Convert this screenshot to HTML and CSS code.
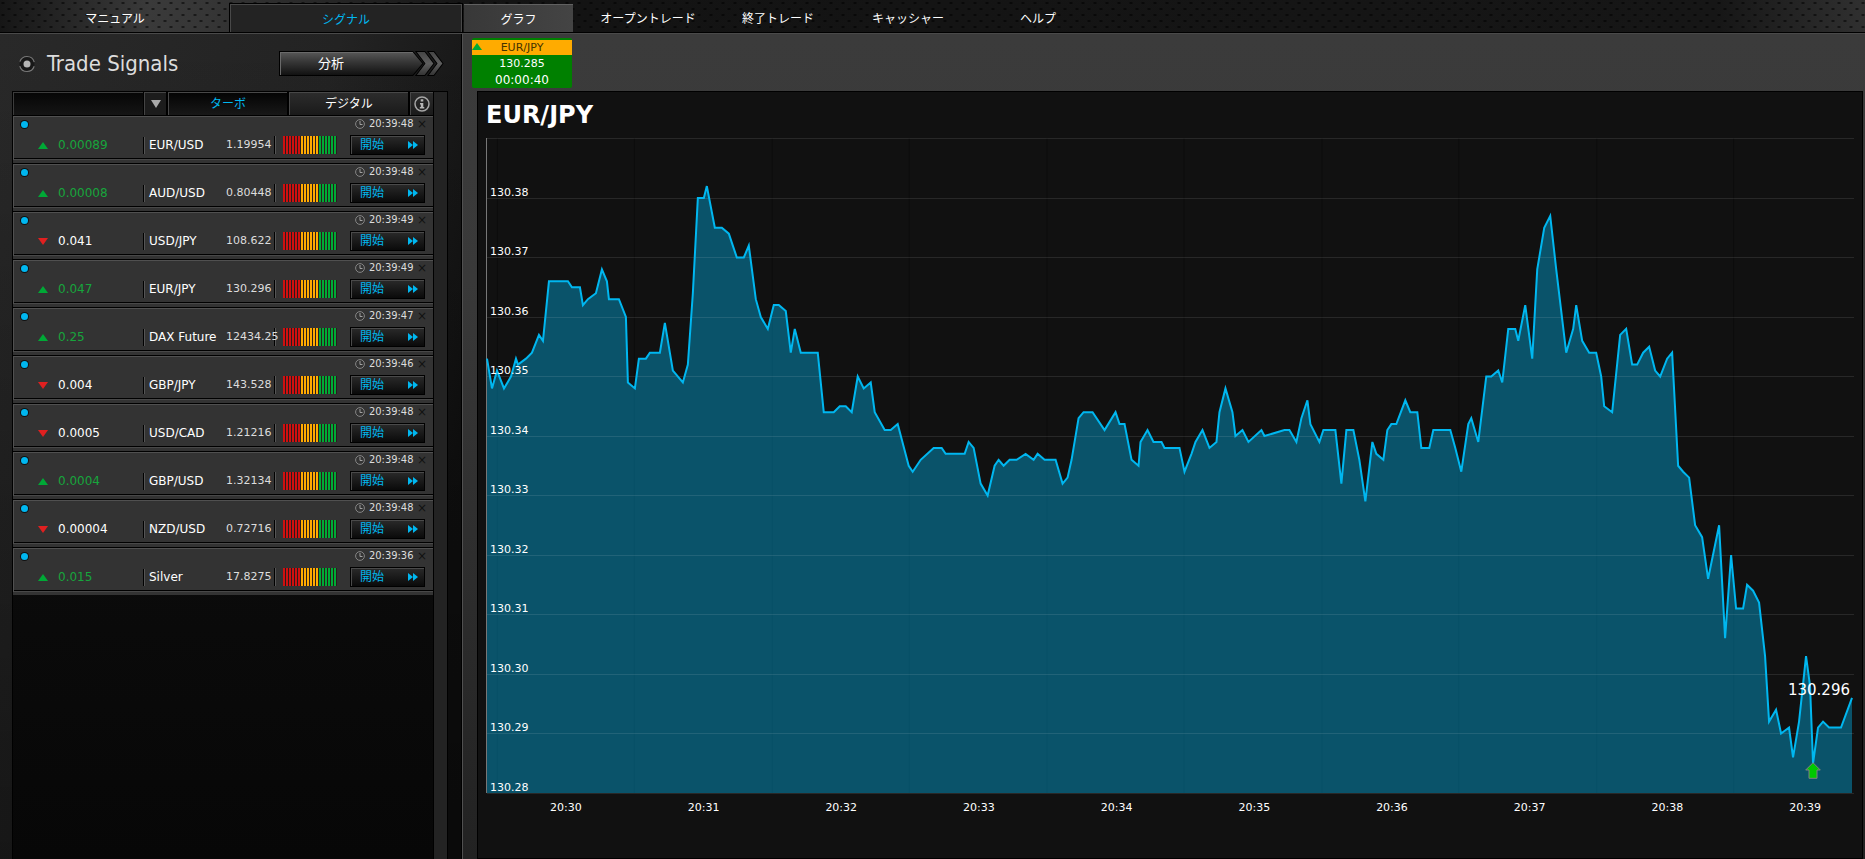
FILE: index.html
```html
<!DOCTYPE html>
<html lang="ja">
<head>
    <meta charset="UTF-8">
    <meta name="viewport" content="width=device-width, initial-scale=1.0">
    <title>Trade Signals</title>
    <link rel="stylesheet" href="styles.css">
</head>
<body>
    <svg class="sprite" aria-hidden="true">
        <symbol id="clock" viewBox="0 0 10 10">
            <circle cx="5" cy="5" r="4.4" fill="none" stroke="#858585"/>
            <path d="M5 2V5.500H7.500" fill="none" stroke="#a0a0a0"/>
        </symbol>
        <symbol id="forward" viewBox="0 0 10 8">
            <path d="M0 0L5 4V0L10 4L5 8V4L0 8Z" fill="#00b7f0"/>
        </symbol>
    </svg>
    <header id="header">
        <nav class="sideTabs">
            <a href="#">マニュアル</a>
            <a href="#" class="on">シグナル</a>
        </nav>
        <nav class="mainTabs">
            <a href="#" class="on">グラフ</a>
            <a href="#">オープントレード</a>
            <a href="#">終了トレード</a>
            <a href="#">キャッシャー</a>
            <a href="#">ヘルプ</a>
        </nav>
    </header>
    <div class="wrap">
        <aside id="signals">
            <div class="title">
                <svg class="radio" viewBox="0 0 20 20" aria-hidden="true">
                    <circle cx="10" cy="10" r="7.500" fill="#181818" stroke="#777" stroke-width="1.200" stroke-dasharray="19 4.560" stroke-dashoffset="-2.280"/>
                    <circle cx="10" cy="10" r="3.500" fill="#b5b5b5"/>
                </svg>
                <h1>Trade Signals</h1>
                <button type="button" class="analysis">
                    <svg viewBox="0 0 164 25" preserveAspectRatio="none" aria-hidden="true">
                        <defs>
                            <linearGradient id="metal" x1="0" y1="0" x2="0" y2="1">
                                <stop offset="0" stop-color="#5a5a5a"/>
                                <stop offset="0.400" stop-color="#393939"/>
                                <stop offset="1" stop-color="#101010"/>
                            </linearGradient>
                            <linearGradient id="chevron" x1="0" y1="0" x2="0" y2="1">
                                <stop offset="0" stop-color="#444"/>
                                <stop offset="0.500" stop-color="#5e5e5e"/>
                                <stop offset="1" stop-color="#333"/>
                            </linearGradient>
                        </defs>
                        <path d="M0.500 0.500H133L143 12.500L133 24.500H0.500Z" fill="url(#metal)" stroke="#000"/>
                        <path d="M136 0.500H145L154 12.500L145 24.500H136L145 12.500Z" fill="url(#chevron)" stroke="#000"/>
                        <path d="M148 0.500H154L163 12.500L154 24.500H148L157 12.500Z" fill="url(#chevron)" stroke="#000"/>
                        <path d="M1.500 24V1.500H133" fill="none" stroke="#6a6a6a"/>
                    </svg>
                    <span>分析</span>
                </button>
            </div>
            <div class="panel">
                <div class="list">
                    <div class="filter">
                        <select aria-label="銘柄"><option></option></select>
                        <span class="arrow"></span>
                        <button type="button" class="on">ターボ</button>
                        <button type="button">デジタル</button>
                        <button type="button" class="info" aria-label="情報">
                            <svg viewBox="0 0 16 16" aria-hidden="true">
                                <circle cx="8" cy="8" r="7" fill="none" stroke="#a5a5a5" stroke-width="1.500"/>
                                <path d="M6.700 3.300H9.300V5.500H6.700ZM6 7H9.300V11H10.300V12.500H5.800V11H6.800V8.400H6Z" fill="#b5b5b5"/>
                            </svg>
                        </button>
                    </div>
                    <ul id="rows"></ul>
                </div>
            </div>
        </aside>
        <main>
            <div class="trades">
                <div class="trade">
                    <h2>EUR/JPY</h2>
                    <p>130.285</p>
                    <p>00:00:40</p>
                </div>
            </div>
            <section class="chart">
                <h2>EUR/JPY</h2>
                <div class="plot">
                    <svg id="graph" viewBox="0 0 1368 655" preserveAspectRatio="none" aria-label="EUR/JPY"></svg>
                    <ol class="prices">
                        <li>130.38</li>
                        <li>130.37</li>
                        <li>130.36</li>
                        <li>130.35</li>
                        <li>130.34</li>
                        <li>130.33</li>
                        <li>130.32</li>
                        <li>130.31</li>
                        <li>130.30</li>
                        <li>130.29</li>
                        <li>130.28</li>
                    </ol>
                    <span class="last">130.296</span>
                    <svg class="entry" viewBox="0 0 16 17" aria-hidden="true">
                        <path d="M8 0.700L15.300 8H12V16.300H4V8H0.700Z" fill="#00c800" stroke="#808080"/>
                    </svg>
                </div>
                <ol class="times">
                    <li>20:30</li>
                    <li>20:31</li>
                    <li>20:32</li>
                    <li>20:33</li>
                    <li>20:34</li>
                    <li>20:35</li>
                    <li>20:36</li>
                    <li>20:37</li>
                    <li>20:38</li>
                    <li>20:39</li>
                </ol>
            </section>
        </main>
    </div>
    <script src="script.js"></script>
</body>
</html>
```
FILE: styles.css
```css
/* reset */
* {box-sizing: border-box;}
body, h1, h2, p, ul, ol {margin: 0; padding: 0;}
li {list-style: none;}
a {text-decoration: none; color: inherit;}
button, select {margin: 0; padding: 0; border: 0; border-radius: 0; background: none; color: inherit; font: inherit; cursor: pointer;}
svg {display: block;}
.sprite {position: absolute; width: 0; height: 0;}
body {
    display: flex;
    flex-direction: column;
    min-height: 100vh;
    background: #111;
    color: #fff;
    font: 12px/16px "DejaVu Sans", "Noto Sans CJK JP", sans-serif;
}
/* header */
#header {
    display: flex;
    height: 34px;
    padding-top: 4px;
    border-bottom: 1px solid #4a4a4a;
    box-shadow: inset 0 -1px #000;
    background:
        radial-gradient(ellipse 2px 1px at 3px 3px, #0008 80%, transparent) 0 0 / 12px 12px,
        radial-gradient(ellipse 2px 1px at 9px 9px, #0008 80%, transparent) 0 0 / 12px 12px,
        linear-gradient(90deg, #161616, #3a3a3a 8%, #363636 11%, #151515 25%, #131313 30%, #161616 92%, #303030);
}
#header nav {display: flex;}
#header a {
    display: flex;
    justify-content: center;
    align-items: center;
    height: 28px;
    padding-top: 2px;
}
.sideTabs {flex: none; width: 464px;}
.sideTabs a {width: 230px;}
.sideTabs .on {
    width: 232px;
    border: 1px solid #484848;
    border-bottom: 0;
    background: #232323;
    box-shadow: 0 0 0 1px #000;
    color: #00b7f0;
}
.mainTabs a {width: 130px;}
.mainTabs .on {
    width: 109px;
    margin-right: 10px;
    border-top: 1px solid #606060;
    background: linear-gradient(90deg, #383838, #444);
}
.wrap {display: flex; flex: 1;}
/* left side */
#signals {
    display: flex;
    flex-direction: column;
    flex: none;
    width: 462px;
    padding-left: 12px;
    background: linear-gradient(180deg, transparent, rgba(0,0,0,0.4)), linear-gradient(105deg, #292929, #232323 50%, #101010 85%);
}
.title {display: flex; align-items: center; height: 57px; padding: 2px 18px 0 5px;}
.radio {width: 20px; height: 20px;}
.title h1 {
    margin-left: 10px;
    color: #ddd;
    font: 22px/28px "DejaVu Sans Condensed", "DejaVu Sans", sans-serif;
}
.analysis {position: relative; width: 165px; height: 25px; margin-left: auto; font-size: 13px;}
.analysis svg {position: absolute; top: 0; left: 0; width: 100%; height: 100%;}
.analysis span {position: relative; display: block; width: 104px; line-height: 20px;}
.panel {
    flex: 1;
    width: 436px;
    padding-right: 13px;
    border: 1px solid #000;
    border-bottom: 0;
    background: #232323;
}
.list {
    height: 100%;
    border-right: 1px solid #000;
    background: linear-gradient(180deg, #111, #070707);
}
.filter {display: flex; gap: 1px; height: 23px; background: #000;}
.filter select {
    width: 130px;
    appearance: none;
    border: 1px solid #3c3c3c;
    border-width: 1px 0 0 1px;
    background: linear-gradient(#060606, #151515);
}
.arrow {
    display: flex;
    justify-content: center;
    align-items: center;
    width: 22px;
    border: 1px solid #444;
    border-width: 1px 0 0 1px;
    background: #1c1c1c;
}
.arrow::after {content: ""; border: 5px solid transparent; border-top: 8px solid #aaa; border-bottom: 0;}
.filter button {
    flex: 1;
    margin-left: 1px;
    border: 1px solid #484848;
    border-width: 1px 0 0 1px;
    background: linear-gradient(#2c2c2c, #1a1a1a);
}
.filter .on {background: linear-gradient(#040404, #181818); color: #00b7f0;}
.filter .info {
    display: flex;
    justify-content: center;
    align-items: center;
    flex: none;
    width: 23px;
}
.info svg {width: 16px; height: 16px;}
/* signal row */
.row {
    height: 48px;
    border-bottom: 3px solid #333;
    border-top: 1px solid #000;
    background: #333;
    box-shadow: inset 1px 1px #505050, inset 0 -1px #484848, inset 0 -2px #000;
}
.top {display: flex; align-items: center; height: 16px; padding: 0 7px 0 8px;}
.dot {width: 7px; height: 7px; margin-right: auto; border-radius: 50%; background: #00b7f0; box-shadow: 0 0 0 1px #111;}
.clock {width: 10px; height: 10px; margin-right: 4px;}
.top time {
    width: 48px;
    color: #ddd;
    font: 11px/14px "DejaVu Sans Condensed", "DejaVu Sans", sans-serif;
}
.close {width: 9px; color: #111; font-size: 12px; line-height: 10px;}
.bottom {display: flex; align-items: center; height: 26px; padding: 0 8px 0 25px;}
.mark {width: 20px;}
.mark::before {content: ""; display: block; width: 0; border: 5px solid transparent; border-top: 0; border-bottom: 7px solid #00a936;}
.down .mark::before {border-top: 7px solid #e02020; border-bottom: 0;}
.change {width: 85px; color: #17a53c;}
.down .change {color: #fff;}
.symbol, .bars {height: 17px; border-left: 1px solid #000; box-shadow: inset 1px 0 #555;}
.symbol {width: 83px; padding-left: 5px;}
.price {position: relative; z-index: 1; width: 48px; color: #ddd; font-size: 11px; white-space: nowrap;}
.bars {width: 62px; height: 18px; padding-left: 8px;}
.bars i {
    display: block;
    width: 54px;
    height: 18px;
    background:
        repeating-linear-gradient(90deg, transparent 0 2px, #2a1c1c 2px 3px),
        linear-gradient(90deg, #d01010 18px, #ffab00 18px 36px, #00a936 36px);
}
.start {
    display: flex;
    justify-content: space-between;
    align-items: center;
    width: 75px;
    height: 20px;
    margin-left: auto;
    padding: 0 6px 0 9px;
    border: 1px solid #000;
    background: linear-gradient(#2a2a2a, #0a0a0a);
    box-shadow: inset 1px 1px #4a4a4a;
    color: #00b7f0;
    line-height: 16px;
}
.start svg {width: 10px; height: 8px;}
/* right side */
main {
    display: flex;
    flex-direction: column;
    flex: 1;
    min-width: 0;
    padding: 0 2px 0 14px;
    border-left: 1px solid #505050;
    box-shadow: -1px 0 #000;
    background: linear-gradient(#3b3b3b, #393939 30%, #222);
}
.trades {height: 57px; margin-left: -5px; padding-top: 4px;}
.trade {
    position: relative;
    width: 100px;
    height: 50px;
    padding-top: 2px;
    border-radius: 2px;
    background: #008000;
    text-align: center;
}
.trade h2 {margin-bottom: 1px; background: #ffab00; color: #443300; font-size: 11px; font-weight: normal; line-height: 15px;}
.trade h2::before {content: ""; position: absolute; top: 5px; left: 0; border: 5px solid transparent; border-top: 0; border-bottom: 7px solid #00a936;}
.trade p {font-size: 12px;}
.trade h2 + p {font-size: 11px;}
.chart {
    display: flex;
    flex-direction: column;
    flex: 1;
    padding: 11px 8px 0 8px;
    border: 1px solid #000;
    background: #111;
}
.chart h2 {font-size: 24px; line-height: 24px;}
.plot {position: relative; flex: 1; margin-top: 11px; border-left: 1px solid #777;}
#graph {position: absolute; width: 100%; height: 100%; overflow: visible;}
.grid {stroke: #fff; stroke-opacity: 0.1;}
.minute {stroke: #0d0d0d;}
.area {fill: #00b7f0; fill-opacity: 0.4;}
.line {fill: none; stroke: #00b7f0; stroke-width: 2px;}
/* price labels stand on the grid lines */
.prices {
    position: absolute;
    inset: 0 auto 0 3px;
    display: grid;
    grid-template-rows: repeat(11, 1fr);
    font-size: 11px;
    line-height: 11px;
}
.prices li {display: flex; align-items: flex-end;}
.last {position: absolute; top: 84%; right: 4px; margin-top: -6px; font-size: 15px;}
.entry {position: absolute; top: 95%; left: 97%; width: 16px; height: 17px; margin: 2px 0 0 -8px;}
.times {
    display: flex;
    justify-content: space-between;
    height: 65px;
    padding: 7px 33px 0 64px;
    font-size: 11px;
}
```
FILE: script.js
```javascript
const signals = [
    ["up", "0.00089", "EUR/USD", "1.19954", "20:39:48"],
    ["up", "0.00008", "AUD/USD", "0.80448", "20:39:48"],
    ["down", "0.041", "USD/JPY", "108.622", "20:39:49"],
    ["up", "0.047", "EUR/JPY", "130.296", "20:39:49"],
    ["up", "0.25", "DAX Future", "12434.25", "20:39:47"],
    ["down", "0.004", "GBP/JPY", "143.528", "20:39:46"],
    ["down", "0.0005", "USD/CAD", "1.21216", "20:39:48"],
    ["up", "0.0004", "GBP/USD", "1.32134", "20:39:48"],
    ["down", "0.00004", "NZD/USD", "0.72716", "20:39:48"],
    ["up", "0.015", "Silver", "17.8275", "20:39:36"]
];

document.getElementById("rows").innerHTML = signals.map(([dir, change, symbol, price, time]) => `
    <li class="row ${dir}">
        <div class="top">
            <span class="dot"></span>
            <svg class="clock" aria-hidden="true"><use href="#clock"/></svg>
            <time>${time}</time>
            <button type="button" class="close" aria-label="閉じる">×</button>
        </div>
        <div class="bottom">
            <span class="mark"></span>
            <span class="change">${change}</span>
            <span class="symbol">${symbol}</span>
            <span class="price">${price}</span>
            <span class="bars"><i></i></span>
            <button type="button" class="start">開始<svg aria-hidden="true"><use href="#forward"/></svg></button>
        </div>
    </li>`).join("");

// [x, price] : price is the part after 130. (353 = 130.353)
const ticks = [
    [0,353],[5,348],[10,351],[17,348],[24,350],[29,353],[31,352],[39,353],[45,354],[52,357],[56,356],[62,366],
    [81,366],[85,365],[93,365],[96,362],[101,363],[109,364],[115,368],[120,366],[122,363],[132,363],[139,360],
    [141,349],[148,348],[152,353],[159,353],[163,354],[173,354],[178,359],[184,353],[186,351],[196,349],[201,352],
    [206,364],[211,380],[217,380],[220,382],[228,375],[235,375],[242,374],[246,372],[250,370],[257,370],[262,372],
    [269,363],[274,360],[281,358],[287,362],[292,362],[299,361],[304,354],[308,358],[314,354],[331,354],[337,344],
    [347,344],[353,345],[359,345],[365,344],[371,350],[377,348],[384,349],[388,344],[398,341],[404,341],[411,342],
    [422,335],[426,334],[434,336],[447,338],[455,338],[459,337],[478,337],[482,339],[487,338],[494,332],[501,330],
    [508,335],[512,336],[517,335],[523,336],[530,336],[539,337],[547,336],[551,337],[558,336],[569,336],[576,332],
    [581,333],[585,336],[592,343],[597,344],[606,344],[618,341],[629,344],[633,342],[638,342],[645,336],[652,335],
    [654,339],[661,341],[667,339],[675,339],[678,338],[693,338],[698,334],[705,337],[709,339],[716,341],[723,338],
    [730,339],[733,344],[739,348],[746,344],[749,340],[756,341],[762,339],[775,341],[778,340],[798,341],[803,341],
    [810,339],[815,343],[821,346],[824,342],[833,339],[837,341],[849,341],[855,332],[860,341],[867,341],[873,336],
    [879,329],[886,339],[890,337],[897,336],[901,341],[905,342],[910,342],[919,346],[924,344],[931,344],[935,338],
    [943,338],[947,341],[964,341],[969,338],[975,334],[982,342],[985,343],[992,339],[1000,350],[1005,350],[1012,351],
    [1016,349],[1022,358],[1029,358],[1032,356],[1039,362],[1046,353],[1051,368],[1058,375],[1064,377],[1070,368],
    [1080,354],[1087,358],[1090,362],[1096,356],[1103,354],[1110,354],[1115,350],[1118,345],[1126,344],[1134,357],
    [1140,358],[1146,352],[1151,352],[1157,354],[1163,355],[1169,351],[1174,350],[1181,353],[1186,354],[1192,335],
    [1197,334],[1203,333],[1209,325],[1216,323],[1222,316],[1233,325],[1239,306],[1245,320],[1250,311],[1257,311],
    [1261,315],[1267,314],[1273,312],[1279,303],[1283,292],[1290,294],[1295,290],[1303,291],[1307,286],[1313,292],
    [1320,303],[1324,298],[1327,285],[1332,291],[1337,292],[1343,291],[1355,291],[1366,296]
];
const priceY = price => 655 - (price - 280) * 5.95;
const line = ticks.map(([x, price]) => x + "," + priceY(price)).join(" ");

let svg = "";
for (let x = 9.5; x < 1368; x += 137.5) {
    svg += `<path class="minute" d="M${Math.round(x) + 0.5} 0V655"/>`;
}
svg += `<polygon class="area" points="0,655 ${line} 1366,655"/>`;
for (let price = 280; price <= 390; price += 10) {
    svg += `<path class="grid" d="M0 ${Math.floor(priceY(price)) + 0.5}H1368"/>`;
}
svg += `<polyline class="line" points="${line}"/>`;
document.getElementById("graph").innerHTML = svg;
```
